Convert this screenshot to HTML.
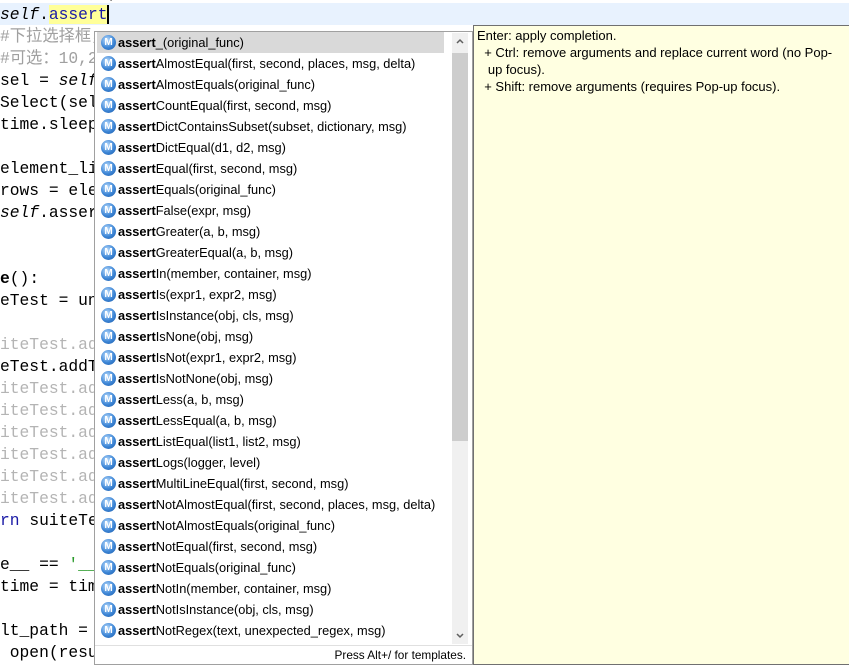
<!DOCTYPE html>
<html><head><meta charset="utf-8"><style>
*{margin:0;padding:0;box-sizing:border-box}
body{width:849px;height:665px;overflow:hidden;background:#fff;position:relative;font-family:"Liberation Sans","Noto Sans CJK SC",sans-serif}
.ed{position:absolute;left:0;font-family:"Liberation Mono","Noto Sans CJK SC",monospace;font-size:16.3px;line-height:22px;height:22px;white-space:pre;color:#000;margin-top:1px}
.cur{position:absolute;left:0;top:3px;width:849px;height:22px;background:#e8f2fe}
.g{color:#b4b4b4}.c{color:#a0a0a0}.i{font-style:italic}.b{font-weight:bold}.k{color:#1a1aa6}.s{color:#2a9a2a}
.pop{position:absolute;left:94px;top:31px;width:379px;height:634px;background:#fff;border:1px solid #a0a0a0}
.row{position:absolute;left:2px;width:347px;height:21px;font-size:12.8px;line-height:21px;color:#000;white-space:nowrap;padding-left:21px}
.row.sel{background:#d9d9d9}
.row b{font-weight:bold}
.ic{position:absolute;left:4px;top:3px;width:15px;height:15px;border-radius:50%;background:radial-gradient(circle at 40% 35%,#bfe0ff,#3d86d6 55%,#1c5aa8);color:#fff;font-size:10px;line-height:15px;text-align:center;font-weight:bold}
.sb{position:absolute;left:357px;top:1px;width:16px;height:611px;background:#f0f0f0}
.th{position:absolute;left:0;top:20px;width:16px;height:388px;background:#cdcdcd}
.foot{position:absolute;left:0;top:613px;width:377px;height:19px;border-top:1px solid #e0e0e0;font-size:11.8px;line-height:19px;text-align:right;padding-right:6px;color:#000}
.info{position:absolute;left:473px;top:25px;width:376px;height:640px;background:#ffffe1;border:1px solid #707070;border-right:none;font-size:13px;line-height:17px;padding:1px 0 0 3px;color:#000}
</style></head><body>
<div class="cur"></div>
<div class="ed" style="top:-19px">        ...)</div>
<div class="ed" style="top:3px"><span class="i">self</span>.<span style="background:#ffff99;color:#1a1aa6">assert</span><span style="border-left:2px solid #000;margin-left:-1px"></span></div>
<div class="ed c" style="top:25px">#下拉选择框，</div>
<div class="ed c" style="top:47px">#可选：10,2</div>
<div class="ed" style="top:69px">sel = <span class="i">self</span></div>
<div class="ed" style="top:91px">Select(sel</div>
<div class="ed" style="top:113px">time.sleep</div>
<div class="ed" style="top:157px">element_li</div>
<div class="ed" style="top:179px">rows = ele</div>
<div class="ed" style="top:201px"><span class="i">self</span>.asser</div>
<div class="ed" style="top:267px"><span class="b">e</span>():</div>
<div class="ed" style="top:289px">eTest = un</div>
<div class="ed g" style="top:333px">iteTest.ad</div>
<div class="ed" style="top:355px">eTest.addT</div>
<div class="ed g" style="top:377px">iteTest.ad</div>
<div class="ed g" style="top:399px">iteTest.ad</div>
<div class="ed g" style="top:421px">iteTest.ad</div>
<div class="ed g" style="top:443px">iteTest.ad</div>
<div class="ed g" style="top:465px">iteTest.ad</div>
<div class="ed g" style="top:487px">iteTest.ad</div>
<div class="ed" style="top:509px"><span class="k">rn</span> suiteTe</div>
<div class="ed" style="top:553px">e__ == <span class="s">'__</span></div>
<div class="ed" style="top:575px">time = tim</div>
<div class="ed" style="top:619px">lt_path =</div>
<div class="ed" style="top:641px"> open(resu</div>
<div class="ed s" style="top:69px;left:466px">s</div>
<div class="ed" style="top:157px;left:466px">h</div>
<div class="ed s i" style="top:179px;left:466px">t</div>
<div class="ed g" style="top:333px;left:466px">e</div>
<div class="ed s" style="top:355px;left:466px">c</div>
<div class="ed" style="top:575px;left:466px">t</div>
<div class="pop">
<div class="row sel" style="top:0px"><span class="ic">M</span><b>assert</b>_(original_func)</div>
<div class="row" style="top:21px"><span class="ic">M</span><b>assert</b>AlmostEqual(first, second, places, msg, delta)</div>
<div class="row" style="top:42px"><span class="ic">M</span><b>assert</b>AlmostEquals(original_func)</div>
<div class="row" style="top:63px"><span class="ic">M</span><b>assert</b>CountEqual(first, second, msg)</div>
<div class="row" style="top:84px"><span class="ic">M</span><b>assert</b>DictContainsSubset(subset, dictionary, msg)</div>
<div class="row" style="top:105px"><span class="ic">M</span><b>assert</b>DictEqual(d1, d2, msg)</div>
<div class="row" style="top:126px"><span class="ic">M</span><b>assert</b>Equal(first, second, msg)</div>
<div class="row" style="top:147px"><span class="ic">M</span><b>assert</b>Equals(original_func)</div>
<div class="row" style="top:168px"><span class="ic">M</span><b>assert</b>False(expr, msg)</div>
<div class="row" style="top:189px"><span class="ic">M</span><b>assert</b>Greater(a, b, msg)</div>
<div class="row" style="top:210px"><span class="ic">M</span><b>assert</b>GreaterEqual(a, b, msg)</div>
<div class="row" style="top:231px"><span class="ic">M</span><b>assert</b>In(member, container, msg)</div>
<div class="row" style="top:252px"><span class="ic">M</span><b>assert</b>Is(expr1, expr2, msg)</div>
<div class="row" style="top:273px"><span class="ic">M</span><b>assert</b>IsInstance(obj, cls, msg)</div>
<div class="row" style="top:294px"><span class="ic">M</span><b>assert</b>IsNone(obj, msg)</div>
<div class="row" style="top:315px"><span class="ic">M</span><b>assert</b>IsNot(expr1, expr2, msg)</div>
<div class="row" style="top:336px"><span class="ic">M</span><b>assert</b>IsNotNone(obj, msg)</div>
<div class="row" style="top:357px"><span class="ic">M</span><b>assert</b>Less(a, b, msg)</div>
<div class="row" style="top:378px"><span class="ic">M</span><b>assert</b>LessEqual(a, b, msg)</div>
<div class="row" style="top:399px"><span class="ic">M</span><b>assert</b>ListEqual(list1, list2, msg)</div>
<div class="row" style="top:420px"><span class="ic">M</span><b>assert</b>Logs(logger, level)</div>
<div class="row" style="top:441px"><span class="ic">M</span><b>assert</b>MultiLineEqual(first, second, msg)</div>
<div class="row" style="top:462px"><span class="ic">M</span><b>assert</b>NotAlmostEqual(first, second, places, msg, delta)</div>
<div class="row" style="top:483px"><span class="ic">M</span><b>assert</b>NotAlmostEquals(original_func)</div>
<div class="row" style="top:504px"><span class="ic">M</span><b>assert</b>NotEqual(first, second, msg)</div>
<div class="row" style="top:525px"><span class="ic">M</span><b>assert</b>NotEquals(original_func)</div>
<div class="row" style="top:546px"><span class="ic">M</span><b>assert</b>NotIn(member, container, msg)</div>
<div class="row" style="top:567px"><span class="ic">M</span><b>assert</b>NotIsInstance(obj, cls, msg)</div>
<div class="row" style="top:588px"><span class="ic">M</span><b>assert</b>NotRegex(text, unexpected_regex, msg)</div>
<div class="sb"><div class="th"></div>
<svg style="position:absolute;left:4px;top:5px" width="8" height="6"><path d="M1 5L4 2L7 5" stroke="#606060" stroke-width="1.5" fill="none"/></svg>
<svg style="position:absolute;left:4px;top:600px" width="8" height="6"><path d="M1 1L4 4L7 1" stroke="#606060" stroke-width="1.5" fill="none"/></svg>
</div>
<div class="foot">Press Alt+/ for templates.</div>
</div>
<div class="info">Enter: apply completion.<br>&nbsp;&nbsp;+ Ctrl: remove arguments and replace current word (no Pop-<br>&nbsp;&nbsp;&nbsp;up focus).<br>&nbsp;&nbsp;+ Shift: remove arguments (requires Pop-up focus).</div>
</body></html>
